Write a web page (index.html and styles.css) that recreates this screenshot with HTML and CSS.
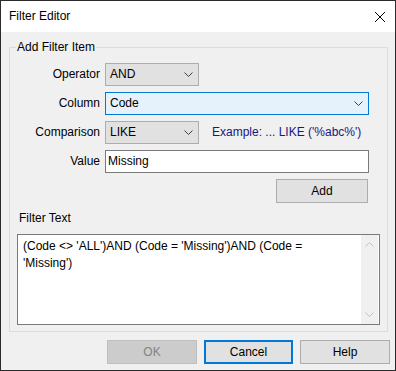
FILE: index.html
```html
<!DOCTYPE html>
<html>
<head>
<title>Filter Editor</title>
<meta http-equiv="Content-Type" content="text/html;charset=utf-8" />
<link rel="stylesheet" href="styles.css">
</head>
<body>
<div class="window">
    <div class="titlebar">
        <span class="title">Filter Editor</span>
        <svg class="close" width="12" height="12" viewBox="0 0 12 12">
            <path d="M1 1 L11 11 M11 1 L1 11" stroke="#000" stroke-width="1" fill="none" />
        </svg>
    </div>

    <div class="content">
        <fieldset class="group">
            <legend>Add Filter Item</legend>

            <div class="form">
                <label>Operator</label>
                <div class="field">
                    <div class="select small"><span>AND</span><svg class="chev" width="9" height="5" viewBox="0 0 9 5"><path d="M0.5 0.5 L4.5 4.5 L8.5 0.5" stroke="#404040" fill="none" /></svg></div>
                </div>

                <label>Column</label>
                <div class="field">
                    <div class="select wide focused"><span>Code</span><svg class="chev" width="9" height="5" viewBox="0 0 9 5"><path d="M0.5 0.5 L4.5 4.5 L8.5 0.5" stroke="#404040" fill="none" /></svg></div>
                </div>

                <label>Comparison</label>
                <div class="field">
                    <div class="select small"><span>LIKE</span><svg class="chev" width="9" height="5" viewBox="0 0 9 5"><path d="M0.5 0.5 L4.5 4.5 L8.5 0.5" stroke="#404040" fill="none" /></svg></div>
                    <span class="example">Example: ... LIKE ('%abc%')</span>
                </div>

                <label>Value</label>
                <div class="field">
                    <div class="textbox wide">Missing</div>
                </div>
            </div>

            <div class="add-row">
                <div class="button add">Add</div>
            </div>

            <div class="filter-label">Filter Text</div>
            <div class="filter-text">
                <div class="text">(Code &lt;&gt; 'ALL')AND (Code = 'Missing')AND (Code =<br>'Missing')</div>
                <div class="scrollbar">
                    <svg width="9" height="5" viewBox="0 0 9 5"><path d="M0.5 4.5 L4.5 0.5 L8.5 4.5" stroke="#c2c2c2" fill="none" /></svg>
                    <svg width="9" height="5" viewBox="0 0 9 5"><path d="M0.5 0.5 L4.5 4.5 L8.5 0.5" stroke="#c2c2c2" fill="none" /></svg>
                </div>
            </div>
        </fieldset>

        <div class="buttons">
            <div class="button disabled">OK</div>
            <div class="button default">Cancel</div>
            <div class="button">Help</div>
        </div>
    </div>
</div>
</body>
</html>
```

FILE: styles.css
```css
html, body {
    margin: 0;
    padding: 0;
}
body {
    font-family: "Liberation Sans", Arial, sans-serif;
    font-size: 12px;
    line-height: 15px;
    color: #000;
    background: #f0f0f0;
}
.window {
    width: 396px;
    height: 371px;
    box-sizing: border-box;
    border: 1px solid #2b2b2b;
    background: #f0f0f0;
    display: flex;
    flex-direction: column;
}
.titlebar {
    height: 31px;
    background: #fff;
    display: flex;
    align-items: center;
    justify-content: space-between;
    padding: 0 9px 0 8px;
}
.title {
    font-size: 12px;
}
.close {
    display: block;
}
.content {
    flex: 1;
    padding: 8px 5px 0 8px;
}
.group {
    margin: 0 2px 0 0;
    padding: 8px 0 6px 0;
    border: 1px solid #dcdcdc;
    min-width: 0;
}
.group legend {
    margin-left: 6px;
    padding: 0 1px;
    line-height: 15px;
}
.form {
    display: grid;
    grid-template-columns: 90px 1fr;
    column-gap: 5px;
    row-gap: 6px;
    align-items: center;
}
.form label {
    text-align: right;
}
.field {
    display: flex;
    align-items: center;
}
.select, .textbox {
    height: 23px;
    box-sizing: border-box;
    display: flex;
    align-items: center;
}
.select {
    justify-content: space-between;
    padding: 0 5px 0 4px;
    background: #e1e1e1;
    border: 1px solid #adadad;
}
.select.focused {
    background: #e5f1fb;
    border-color: #0078d7;
}
.chev {
    display: block;
}
.small {
    width: 94px;
}
.wide {
    width: 264px;
}
.textbox {
    background: #fff;
    border: 1px solid #7a7a7a;
    padding: 0 2px;
}
.example {
    margin-left: 13px;
    color: #1b1580;
}
.add-row {
    display: flex;
    justify-content: flex-end;
    padding: 6px 19px 0 0;
}
.button {
    width: 90px;
    height: 24px;
    box-sizing: border-box;
    background: #e1e1e1;
    border: 1px solid #adadad;
    display: flex;
    align-items: center;
    justify-content: center;
}
.button.add {
    width: 92px;
}
.button.default {
    width: 89px;
    border: 2px solid #0078d7;
}
.button.disabled {
    background: #cccccc;
    border-color: #bfbfbf;
    color: #838383;
}
.filter-label {
    margin: 8px 0 0 9px;
}
.filter-text {
    margin: 8px 7px 0 7px;
    height: 91px;
    box-sizing: border-box;
    background: #fff;
    border: 1px solid #7a7a7a;
    display: flex;
}
.filter-text .text {
    flex: 1;
    padding: 3px 5px;
    line-height: 17px;
}
.scrollbar {
    width: 17px;
    margin: 0 1px 0 0;
    background: #f0f0f0;
    display: flex;
    flex-direction: column;
    justify-content: space-between;
    align-items: center;
    padding: 7px 0 7px 0;
}
.scrollbar svg {
    display: block;
}
.buttons {
    display: flex;
    justify-content: flex-end;
    gap: 7px;
    margin-top: 8px;
}
```
